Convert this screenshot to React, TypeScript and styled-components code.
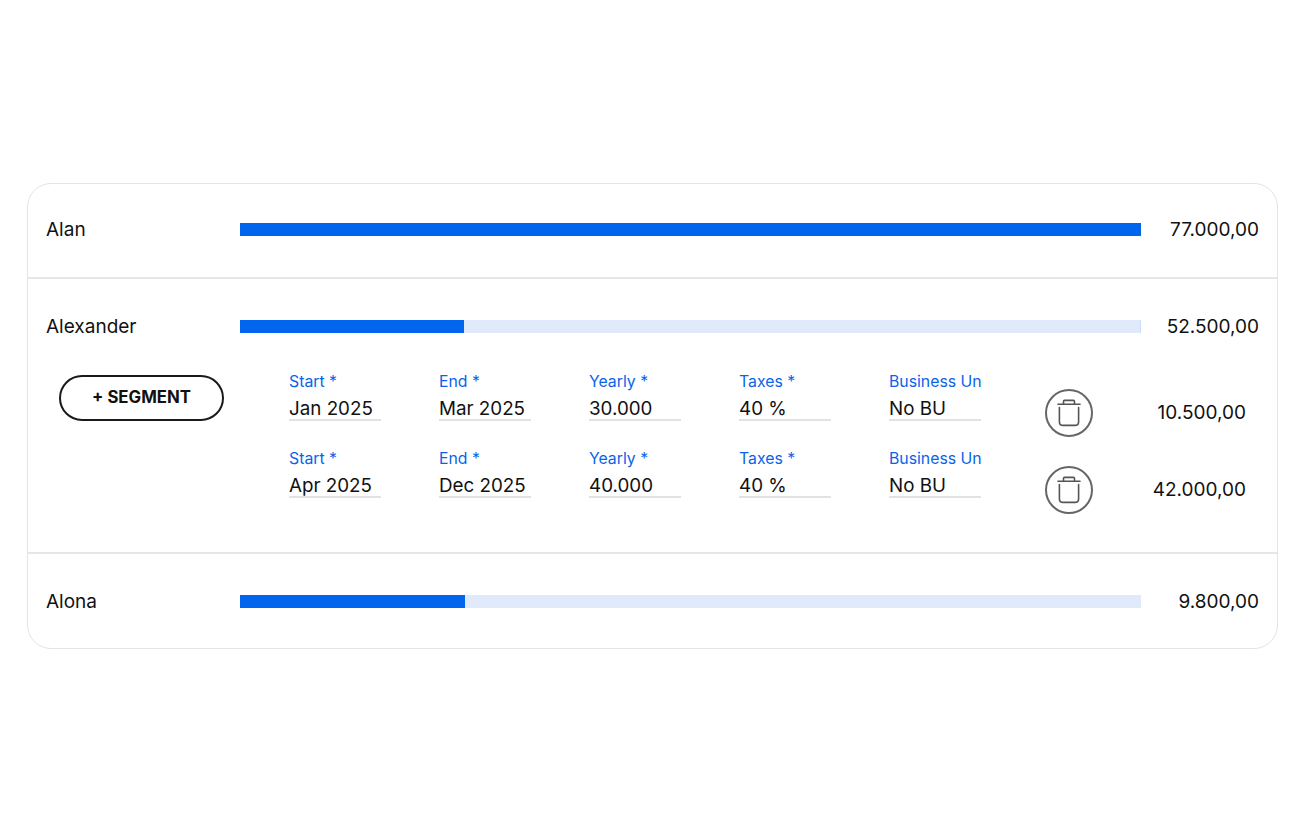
import React from "react";
import styled, { createGlobalStyle } from "styled-components";

const Global = createGlobalStyle`
  html, body { margin: 0; padding: 0; background: #fff; }
  body { font-family: "Inter", "Liberation Sans", sans-serif; color: #111; }
`;

const Page = styled.main`
  box-sizing: border-box;
  width: 1305px;
  height: 833px;
  padding: 183px 27px 0 27px;
`;

const Card = styled.section`
  box-sizing: border-box;
  width: 1251px;
  height: 466px;
  border: 1px solid #e4e4e4;
  border-radius: 24px;
  background: #fff;
  display: flex;
  flex-direction: column;
`;

const Row = styled.div<{ $h: number; $divider?: boolean }>`
  box-sizing: border-box;
  height: ${(p) => p.$h}px;
  flex: none;
  border-bottom: ${(p) => (p.$divider ? "2px solid #e6e6e6" : "none")};
  display: flex;
  flex-direction: column;
`;

const Summary = styled.div<{ $top: number }>`
  display: flex;
  align-items: center;
  height: 13px;
  margin-top: ${(p) => p.$top}px;
  padding: 0 18px;
`;

const Name = styled.span`
  width: 194px;
  flex: none;
  font-size: 19px;
  line-height: 24px;
`;

const Track = styled.div<{ $border?: boolean }>`
  box-sizing: border-box;
  width: 901px;
  height: 13px;
  flex: none;
  background: #e0eafb;
  border-right: ${(p) => (p.$border ? "1px solid #c9dcf6" : "none")};
`;

const Fill = styled.div`
  height: 100%;
  background: #0265ee;
`;

const Total = styled.span`
  flex: 1;
  text-align: right;
  font-size: 19px;
  line-height: 24px;
`;

const Details = styled.div`
  display: flex;
  margin-top: 42px;
  padding-left: 31px;
`;

const SegmentButton = styled.button`
  box-sizing: border-box;
  width: 165px;
  height: 46px;
  flex: none;
  border: 2px solid #1a1a1a;
  border-radius: 23px;
  background: #fff;
  color: #111;
  font-family: inherit;
  font-size: 16.8px;
  font-weight: 700;
  padding: 0 0 2px;
`;

const Segments = styled.div`
  display: flex;
  flex-direction: column;
  gap: 30.5px;
  margin-left: 65px;
  margin-top: -3px;
`;

const SegmentRow = styled.div`
  display: flex;
  align-items: flex-start;
  height: 46px;
`;

const Field = styled.div`
  width: 150px;
  flex: none;
  display: flex;
  flex-direction: column;
`;

const Label = styled.span`
  height: 20px;
  white-space: nowrap;
  font-size: 15.8px;
  line-height: 20px;
  color: #0a63ea;
`;

const Value = styled.span`
  box-sizing: border-box;
  width: 92px;
  height: 29px;
  padding-top: 6px;
  font-size: 18.8px;
  line-height: 22px;
  white-space: nowrap;
  border-bottom: 2px solid #e2e2e2;
`;

const TrashButton = styled.button`
  box-sizing: border-box;
  width: 48px;
  height: 48px;
  flex: none;
  margin: 17px 0 0 6px;
  padding: 0;
  border: 2px solid #666;
  border-radius: 50%;
  background: #fff;
  display: flex;
  align-items: center;
  justify-content: center;
`;

const Amount = styled.span`
  width: 153px;
  flex: none;
  margin-top: 29px;
  text-align: right;
  font-size: 19px;
  line-height: 24px;
`;

const TrashIcon = () => (
  <svg width="26" height="30" viewBox="0 0 26 30" fill="none" stroke="#555" strokeWidth="1.6">
    <path d="M2 6.3h22" strokeLinecap="round" />
    <path d="M7.5 6.3V3.4c0-.6.4-1 1-1h9c.6 0 1 .4 1 1v2.9" />
    <path d="M3.4 9.5v14.2c0 2.2 1.4 3.7 3.6 3.7h12c2.2 0 3.6-1.5 3.6-3.7V9.5" strokeLinecap="round" />
  </svg>
);

const segments = [
  { start: "Jan 2025", end: "Mar 2025", yearly: "30.000", amount: "10.500,00" },
  { start: "Apr 2025", end: "Dec 2025", yearly: "40.000", amount: "42.000,00" },
];

export default function App() {
  return (
    <Page>
      <Global />
      <Card>
        <Row $h={95} $divider>
          <Summary $top={39}>
            <Name>Alan</Name>
            <Track>
              <Fill style={{ width: "100%" }} />
            </Track>
            <Total>77.000,00</Total>
          </Summary>
        </Row>
        <Row $h={275} $divider>
          <Summary $top={41}>
            <Name>Alexander</Name>
            <Track $border>
              <Fill style={{ width: "224px" }} />
            </Track>
            <Total>52.500,00</Total>
          </Summary>
          <Details>
            <SegmentButton>+ SEGMENT</SegmentButton>
            <Segments>
              {segments.map((s) => (
                <SegmentRow key={s.start}>
                  <Field>
                    <Label>Start *</Label>
                    <Value>{s.start}</Value>
                  </Field>
                  <Field>
                    <Label>End *</Label>
                    <Value>{s.end}</Value>
                  </Field>
                  <Field>
                    <Label>Yearly *</Label>
                    <Value>{s.yearly}</Value>
                  </Field>
                  <Field>
                    <Label>Taxes *</Label>
                    <Value>40 %</Value>
                  </Field>
                  <Field>
                    <Label>Business Un</Label>
                    <Value>No BU</Value>
                  </Field>
                  <TrashButton aria-label="Delete">
                    <TrashIcon />
                  </TrashButton>
                  <Amount>{s.amount}</Amount>
                </SegmentRow>
              ))}
            </Segments>
          </Details>
        </Row>
        <Row $h={94}>
          <Summary $top={41}>
            <Name>Alona</Name>
            <Track>
              <Fill style={{ width: "225px" }} />
            </Track>
            <Total>9.800,00</Total>
          </Summary>
        </Row>
      </Card>
    </Page>
  );
}
